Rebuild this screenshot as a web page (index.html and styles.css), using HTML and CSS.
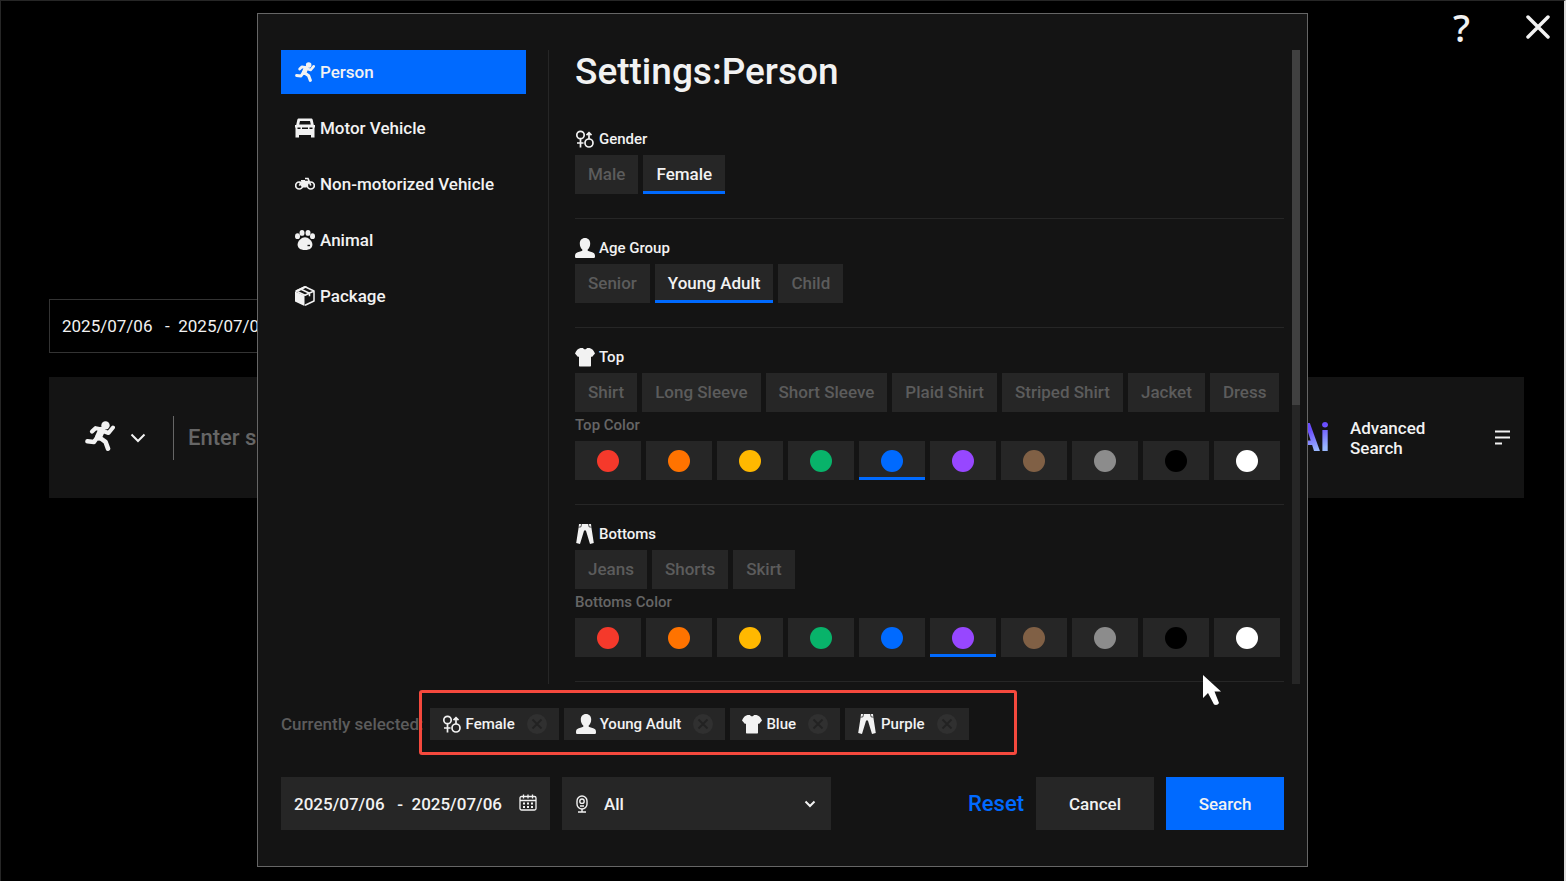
FILE: index.html
```html
<!DOCTYPE html>
<html lang="en">
<head>
  <meta charset="UTF-8" />
  <meta name="viewport" content="width=device-width, initial-scale=1.0" />
  <title>Settings: Person</title>
  <link rel="stylesheet" href="styles.css">
</head>
<body>
  <!-- Icon sprite -->
  <svg class="sprite" aria-hidden="true">
    <symbol id="i-run" viewBox="0 0 30 30">
      <circle cx="20.5" cy="4.4" r="4.2" fill="currentColor"/>
      <g fill="none" stroke="currentColor" stroke-linecap="round" stroke-linejoin="round">
        <path d="M7 10.5 10.5 7.2 17 8.5" stroke-width="4.2"/>
        <path d="M16.5 9.5 13.5 16" stroke-width="7"/>
        <path d="M18 10 23.5 12 28 6.5" stroke-width="4"/>
        <path d="M12.5 16 9 21 2.4 20.2" stroke-width="4.4"/>
        <path d="M14.5 16.5 20.5 20.8 23 27.6" stroke-width="4.600"/>
      </g>
    </symbol>
    <symbol id="i-car" viewBox="0 0 20 20">
      <path fill="currentColor" fill-rule="evenodd" d="M4 .5h12c.9 0 1.5.5 1.7 1.300L18.800 7H20v2.500h-.5V19.500h-3.500V17H4v2.500H.5V9.500H0V7h1.200L2.300 1.800C2.500 1 3.100.5 4 .5ZM5 3 4.200 6.500h11.600L15 3ZM2.500 9.500v1.500h3V9.500Zm12 0v1.500h3V9.500ZM7 9.500V11h6V9.500Z"/>
    </symbol>
    <symbol id="i-bike" viewBox="0 0 20 20">
      <g fill="none" stroke="currentColor" stroke-width="1.700">
        <circle cx="4.200" cy="11.500" r="3.500"/><circle cx="15.800" cy="11.500" r="3.500"/>
        <path d="M4.200 11.500 8 7.500h5l-2.500 4.500H7L4.500 8M10 4.500h3l2.800 7M6 6.800h4"/>
      </g>
      <path fill="currentColor" d="M7 8h7l-2.500 5.500H7Z"/>
    </symbol>
    <symbol id="i-paw" viewBox="0 0 20 20">
      <g fill="currentColor">
        <ellipse cx="2.500" cy="6.200" rx="2.500" ry="2.900"/><ellipse cx="7" cy="2.900" rx="2.500" ry="2.900"/>
        <ellipse cx="13" cy="2.900" rx="2.500" ry="2.900"/><ellipse cx="17.500" cy="6.200" rx="2.500" ry="2.900"/>
        <path d="M10 7.200c3 0 7.400 3.300 7.400 7.300 0 3.300-2.500 5.500-7.400 5.500s-7.400-2.200-7.400-5.500c0-4 4.400-7.300 7.400-7.300Z"/>
      </g>
      <path d="M12.500 15.500h2.500" stroke="#141414" stroke-width="1.400"/>
    </symbol>
    <symbol id="i-box" viewBox="0 0 20 20">
      <path fill="currentColor" d="M0 5.500 9.500 9.500V20L0 15.500ZM10 0l2.500 1-9 4.500L.800 4.500Z"/>
      <path fill="none" stroke="currentColor" stroke-width="1.500" stroke-linejoin="round" d="M10 .800 19 5v10l-9 4.200M19 5l-9 4.200L1 5l9-4.200M5.500 3l9 4.200v3"/>
    </symbol>
    <symbol id="i-gender" viewBox="0 0 20 20">
      <g fill="none" stroke="currentColor" stroke-width="1.700">
        <circle cx="5.500" cy="6" r="3.700"/><path d="M5.500 9.700V18.500M2 14h6.500"/>
        <circle cx="14" cy="14" r="4"/><path d="M14 10V3.500M11.500 6.200l2.500-2.500 2.500 2.500"/>
      </g>
    </symbol>
    <symbol id="i-user" viewBox="0 0 20 20">
      <path fill="currentColor" d="M10 0c3.200 0 5.200 2.300 5.200 5.500 0 2.600-1 4.900-2.500 6v1.300c1.500.900 4.300 1.200 6 2.300 1 .7 1.300 1.600 1.300 3.400 0 .9-.4 1.500-1.200 1.500H1.200C.4 20 0 19.400 0 18.500c0-1.800.3-2.700 1.300-3.400 1.700-1.100 4.500-1.400 6-2.300v-1.300c-1.500-1.100-2.500-3.400-2.500-6C4.800 2.300 6.800 0 10 0Z"/>
    </symbol>
    <symbol id="i-shirt" viewBox="0 0 20 20">
      <path fill="currentColor" d="M5.500 1 8 1c.5 1 1 1.300 2 1.300S11.500 2 12 1h2.500c2.500.8 4.300 2.300 5.500 5.500L17 10l-1-.6V18.500c0 .6-.3 1-1 1H5c-.7 0-1-.4-1-1V9.400L3 10 0 6.500C1.200 3.300 3 1.800 5.500 1Z"/>
    </symbol>
    <symbol id="i-pants" viewBox="0 0 20 20">
      <path fill="currentColor" d="M4 0h12l.4 3.500L18.800 19l-3.800 1L10.900 6.500H9.100L5 20l-3.800-1L3.600 3.500Z"/>
      <path d="M3.500 3.200 6 2.800 6.500 0M16.500 3.200 14 2.800 13.500 0" fill="none" stroke="#141414" stroke-width=".7"/>
    </symbol>
    <symbol id="i-remove" viewBox="0 0 20 20">
      <circle cx="10" cy="10" r="10" fill="#303030"/>
      <path d="m5.500 5.500 9 9m0-9-9 9" stroke="#222" stroke-width="1.800"/>
    </symbol>
    <symbol id="i-calendar" viewBox="0 0 18 18">
      <g fill="none" stroke="currentColor" stroke-width="1.300">
        <rect x="1" y="2.500" width="16" height="13.500" rx="1.500"/>
        <path d="M1 6.500h16M4.500.5v4M9 .5v4M13.500.5v4"/>
        <path d="M4 9.500h10M4 13h10" stroke-width="2" stroke-dasharray="2 2"/>
      </g>
    </symbol>
    <symbol id="i-camera" viewBox="0 0 12 18">
      <g fill="none" stroke="currentColor" stroke-width="1.400">
        <rect x="1" y="1" width="10" height="13" rx="5"/>
        <circle cx="6" cy="6.200" r="2.200"/><path d="M6 14v2.500M2 17h8M4 11h4"/>
      </g>
    </symbol>
    <symbol id="i-chevron" viewBox="0 0 16 10">
      <path d="m1.500 1.500 6.500 6.500 6.500-6.500" fill="none" stroke="currentColor" stroke-width="2"/>
    </symbol>
    <symbol id="i-chevron-small" viewBox="0 0 12 8">
      <path d="m1.500 1.500 4.500 4.500 4.500-4.500" fill="none" stroke="currentColor" stroke-width="2"/>
    </symbol>
  </svg>

  <!-- Page behind the dialog -->
  <div class="page">
    <div class="window-buttons">
      <button class="help" aria-label="Help">?</button>
      <button class="close" aria-label="Close">
        <svg viewBox="0 0 24 24"><path d="m2 2 20 20m0-20L2 22" stroke="currentColor" stroke-width="3.500" stroke-linecap="round"/></svg>
      </button>
    </div>
    <main>
      <input class="page-date" type="text" aria-label="Search dates" value="2025/07/06   -  2025/07/06" />
      <div class="search-bar">
        <button class="target" aria-label="Search target">
          <svg class="target-icon"><use href="#i-run"/></svg>
          <svg class="target-arrow"><use href="#i-chevron"/></svg>
        </button>
        <input class="query" type="text" aria-label="Search" placeholder="Enter search content" />
        <button class="advanced">
          <span class="ai">Ai</span>
          <span class="advanced-label">Advanced Search</span>
          <svg class="lines" viewBox="0 0 15 15"><path d="M0 1.500h15M0 7.500h15M0 13.500h7" stroke="currentColor" stroke-width="2"/></svg>
        </button>
      </div>
    </main>
  </div>

  <!-- Settings dialog -->
  <div class="dialog" role="dialog" aria-labelledby="dialogTitle">
    <div class="dialog-body">
      <nav class="sidebar">
        <a class="active" href="#person"><svg class="icon"><use href="#i-run"/></svg>Person</a>
        <a href="#motor"><svg class="icon"><use href="#i-car"/></svg>Motor Vehicle</a>
        <a href="#non-motor"><svg class="icon"><use href="#i-bike"/></svg>Non-motorized Vehicle</a>
        <a href="#animal"><svg class="icon"><use href="#i-paw"/></svg>Animal</a>
        <a href="#package"><svg class="icon"><use href="#i-box"/></svg>Package</a>
      </nav>

      <div class="pane">
        <h1 id="dialogTitle">Settings:Person</h1>

        <section>
          <h2><svg class="icon"><use href="#i-gender"/></svg>Gender</h2>
          <div class="row">
            <button class="tag">Male</button>
            <button class="tag selected">Female</button>
          </div>
        </section>

        <section>
          <h2><svg class="icon"><use href="#i-user"/></svg>Age Group</h2>
          <div class="row">
            <button class="tag">Senior</button>
            <button class="tag selected">Young Adult</button>
            <button class="tag">Child</button>
          </div>
        </section>

        <section>
          <h2><svg class="icon"><use href="#i-shirt"/></svg>Top</h2>
          <div class="row">
            <button class="tag">Shirt</button>
            <button class="tag">Long Sleeve</button>
            <button class="tag">Short Sleeve</button>
            <button class="tag">Plaid Shirt</button>
            <button class="tag">Striped Shirt</button>
            <button class="tag">Jacket</button>
            <button class="tag">Dress</button>
          </div>
          <h3>Top Color</h3>
          <div class="row">
            <button class="color red" aria-label="Red"></button>
            <button class="color orange" aria-label="Orange"></button>
            <button class="color yellow" aria-label="Yellow"></button>
            <button class="color green" aria-label="Green"></button>
            <button class="color blue selected" aria-label="Blue"></button>
            <button class="color purple" aria-label="Purple"></button>
            <button class="color brown" aria-label="Brown"></button>
            <button class="color gray" aria-label="Gray"></button>
            <button class="color black" aria-label="Black"></button>
            <button class="color white" aria-label="White"></button>
          </div>
        </section>

        <section>
          <h2><svg class="icon"><use href="#i-pants"/></svg>Bottoms</h2>
          <div class="row">
            <button class="tag">Jeans</button>
            <button class="tag">Shorts</button>
            <button class="tag">Skirt</button>
          </div>
          <h3>Bottoms Color</h3>
          <div class="row">
            <button class="color red" aria-label="Red"></button>
            <button class="color orange" aria-label="Orange"></button>
            <button class="color yellow" aria-label="Yellow"></button>
            <button class="color green" aria-label="Green"></button>
            <button class="color blue" aria-label="Blue"></button>
            <button class="color purple selected" aria-label="Purple"></button>
            <button class="color brown" aria-label="Brown"></button>
            <button class="color gray" aria-label="Gray"></button>
            <button class="color black" aria-label="Black"></button>
            <button class="color white" aria-label="White"></button>
          </div>
        </section>
      </div>

      <div class="scroll-track"><div class="scroll-thumb"></div></div>
    </div>

    <div class="current">
      <span class="current-label">Currently selected:</span>
      <div class="chips">
        <span class="chip"><svg class="icon"><use href="#i-gender"/></svg>Female<button aria-label="Remove Female"><svg class="icon"><use href="#i-remove"/></svg></button></span>
        <span class="chip"><svg class="icon"><use href="#i-user"/></svg>Young Adult<button aria-label="Remove Young Adult"><svg class="icon"><use href="#i-remove"/></svg></button></span>
        <span class="chip"><svg class="icon"><use href="#i-shirt"/></svg>Blue<button aria-label="Remove Blue"><svg class="icon"><use href="#i-remove"/></svg></button></span>
        <span class="chip"><svg class="icon"><use href="#i-pants"/></svg>Purple<button aria-label="Remove Purple"><svg class="icon"><use href="#i-remove"/></svg></button></span>
      </div>
    </div>

    <div class="footer">
      <div class="field">
        <input type="text" aria-label="Date range" value="2025/07/06   -  2025/07/06" />
        <svg class="calendar"><use href="#i-calendar"/></svg>
      </div>
      <div class="field">
        <svg class="camera"><use href="#i-camera"/></svg>
        <select aria-label="Camera"><option>All</option></select>
        <svg class="arrow"><use href="#i-chevron-small"/></svg>
      </div>
      <button class="reset">Reset</button>
      <button class="btn">Cancel</button>
      <button class="btn primary">Search</button>
    </div>

    <svg class="cursor" viewBox="0 0 20 32"><path d="M1 1v23l5-5 6 11.500c2 1 4 .5 5-1.500l-4.500-11.500H19Z" fill="#fff"/></svg>
  </div>
</body>
</html>
```
FILE: styles.css
```css
* {
  margin: 0;
  padding: 0;
  box-sizing: border-box;
}

body {
  font-family: Roboto, sans-serif;
  font-size: 17px;
  font-weight: 500;
  background: #000;
  color: #f2f2f2;
  min-height: 100vh;
  position: relative;
  display: flex;
  justify-content: center;
  align-items: flex-start;
  border-top: 1px solid #262626;
  border-left: 1px solid #262626;
  border-right: 2px solid #dcdcdc;
}

button,
input,
select {
  font: inherit;
  color: inherit;
  background: none;
  border: none;
  outline: none;
}

button {
  cursor: pointer;
}

.sprite {
  position: absolute;
  width: 0;
  height: 0;
}

.icon {
  width: 20px;
  height: 20px;
  flex: none;
}

/* Page behind the dialog */
.page {
  width: 100%;
}

.window-buttons {
  display: flex;
  justify-content: flex-end;
  align-items: center;
  gap: 56px;
  height: 52px;
  padding-right: 14px;
}

.help {
  font-family: "Noto Sans", sans-serif;
  font-size: 38px;
  line-height: 52px;
  font-weight: 500;
}

.close,
.close svg {
  display: block;
  width: 24px;
  height: 24px;
}

main {
  padding: 246px 40px 0 48px;
}

.page-date {
  display: block;
  width: 270px;
  height: 54px;
  padding: 0 12px;
  border: 1px solid #333;
  font-weight: 400;
}

.search-bar {
  display: flex;
  align-items: center;
  height: 121px;
  margin-top: 24px;
  padding: 0 14px 0 36px;
  background: #141414;
}

.target {
  display: flex;
  align-items: center;
  gap: 15px;
  height: 44px;
  padding-right: 27px;
  border-right: 1px solid #666;
}

.target-icon {
  width: 30px;
  height: 30px;
  margin-bottom: 4px;
}

.target-arrow {
  width: 16px;
  height: 10px;
}

.query {
  flex: 1;
  padding-left: 14px;
  font-size: 22px;
}

.query::placeholder {
  color: #666;
  opacity: 1;
}

.advanced {
  display: flex;
  align-items: center;
  text-align: left;
}

.ai {
  font-size: 38px;
  font-weight: 700;
  background: linear-gradient(160deg, #6a4dff 35%, #9ab8ff 75%);
  -webkit-background-clip: text;
  background-clip: text;
  color: transparent;
}

.advanced-label {
  width: 121px;
  margin: 0 24px 0 20px;
  line-height: 20px;
}

.lines {
  width: 15px;
  height: 15px;
}

/* Settings dialog */
.dialog {
  position: absolute;
  top: 12px;
  width: 1051px;
  max-width: 94%;
  padding: 36px 23px;
  background: #141414;
  border: 1px solid #666;
}

.dialog-body {
  display: flex;
  margin-right: -16px;
}

.sidebar {
  display: flex;
  flex-direction: column;
  gap: 12px;
  width: 268px;
  padding-right: 22px;
  border-right: 1px solid #262626;
  flex: none;
}

.sidebar a {
  display: flex;
  align-items: center;
  gap: 5px;
  height: 44px;
  padding-left: 14px;
  color: #f2f2f2;
  text-decoration: none;
}

.sidebar a.active {
  background: #006aff;
}

.pane {
  flex: 1;
  min-width: 0;
  margin-left: 26px;
  padding-bottom: 2px;
}

h1 {
  margin-bottom: 35px;
  font-size: 37px;
  line-height: 44px;
  font-weight: 500;
}

section {
  padding-bottom: 24px;
  border-bottom: 1px solid #262626;
}

section + section {
  padding-top: 19px;
}

h2 {
  display: flex;
  align-items: center;
  gap: 4px;
  margin-bottom: 6px;
  font-size: 15px;
  line-height: 20px;
  font-weight: 500;
}

h3 {
  padding: 3px 0 6px;
  font-size: 15px;
  line-height: 20px;
  font-weight: 500;
  color: #666;
}

.row {
  display: flex;
  gap: 5px;
}

.tag,
.color {
  height: 39px;
  background: #262626;
  border-bottom: 3px solid #262626;
}

.tag {
  padding: 2px 13px 0;
  color: #5c5c5c;
  white-space: nowrap;
}

.tag.selected {
  color: #f2f2f2;
}

.tag.selected,
.color.selected {
  border-bottom-color: #006aff;
}

.color {
  width: 66px;
  padding-top: 3px;
}

.color::before {
  content: "";
  display: block;
  width: 22px;
  height: 22px;
  margin: 0 auto;
  border-radius: 50%;
  background: currentColor;
}

.red { color: #f5392b; }
.orange { color: #ff7300; }
.yellow { color: #ffb800; }
.green { color: #08b36a; }
.blue { color: #006aff; }
.purple { color: #9747ff; }
.brown { color: #806045; }
.gray { color: #8c8c8c; }
.black { color: #000; }
.white { color: #fff; }

.scroll-track {
  width: 8px;
  margin-left: 8px;
  background: #262626;
}

.scroll-thumb {
  height: 56%;
  background: #404040;
}

/* Current selection */
.current {
  display: flex;
  align-items: center;
  gap: 6px;
  margin-top: 24px;
}

.current-label {
  color: #5c5c5c;
}

.chips {
  display: flex;
  gap: 5px;
  position: relative;
}

/* highlight frame round the chips */
.chips::after {
  content: "";
  position: absolute;
  inset: -18px -48px -15px -11px;
  border: 3px solid #f5493d;
  border-radius: 3px;
  pointer-events: none;
}

.chip {
  display: flex;
  align-items: center;
  gap: 4px;
  height: 32px;
  padding: 0 12px;
  background: #262626;
  font-size: 15px;
}

.chip button {
  display: flex;
  margin-left: 8px;
}

/* Footer */
.footer {
  display: flex;
  align-items: center;
  gap: 12px;
  margin-top: 37px;
}

.field {
  position: relative;
  width: 269px;
  height: 53px;
  background: #262626;
}

.field input,
.field select {
  width: 100%;
  height: 100%;
  padding: 0 13px;
}

.field select {
  padding-left: 42px;
  appearance: none;
}

.field svg {
  position: absolute;
  pointer-events: none;
}

.calendar {
  top: 17px;
  right: 13px;
  width: 18px;
  height: 18px;
}

.camera {
  top: 18px;
  left: 14px;
  width: 12px;
  height: 18px;
}

.arrow {
  top: 23px;
  right: 15px;
  width: 12px;
  height: 8px;
}

.reset {
  margin-left: auto;
  color: #006aff;
  font-size: 22px;
}

.btn {
  width: 118px;
  height: 53px;
  background: #262626;
}

.btn.primary {
  background: #006aff;
}

.cursor {
  position: absolute;
  right: 85px;
  bottom: 160px;
  width: 20px;
  height: 32px;
}
```
